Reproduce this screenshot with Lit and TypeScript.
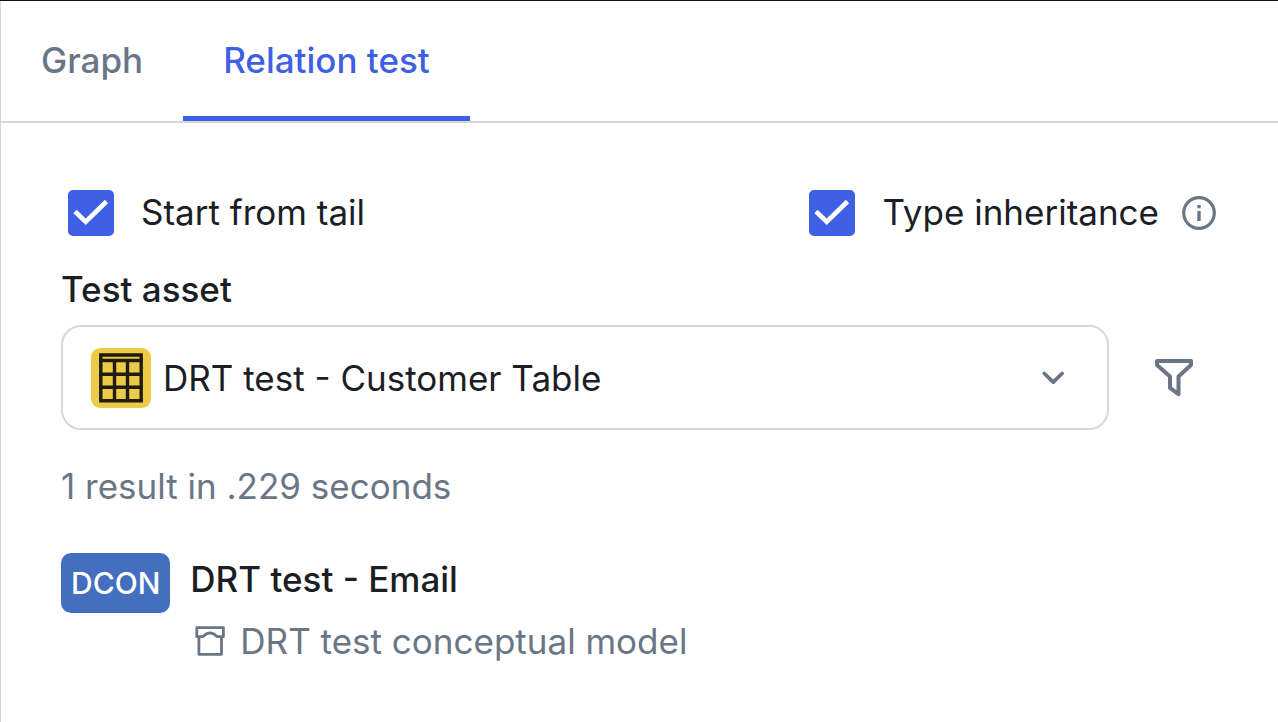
import { LitElement, html, css } from "lit";
import { customElement, state } from "lit/decorators.js";

@customElement("app-root")
class AppRoot extends LitElement {
  static styles = css`
    :host {
      display: block;
      box-sizing: border-box;
      min-height: 100vh;
      border-top: 1px solid #0b1424;
      background: #fff;
      color: #1b1e24;
      font: 400 35px/44px Inter, "Liberation Sans", sans-serif;
    }
    * { box-sizing: border-box; }
    svg { display: block; flex: none; fill: none; }
    button, select { font: inherit; color: inherit; background: none; border: 0; margin: 0; padding: 0; }
    .panel { min-height: calc(100vh - 1px); border-left: 1px solid #d5d8df; }
    .tabs { display: flex; border-bottom: 2px solid #d5d8df; }
    .tab {
      padding: 37px 40px 34px;
      border-bottom: 5px solid transparent;
      color: #6a7686;
      font-weight: 500;
    }
    .tab.active { color: #3f5fe4; border-bottom-color: #3f5fe4; }
    .content { padding: 60px 59px 60px 60px; }
    .options { display: flex; justify-content: space-between; align-items: center; height: 60px; }
    .option { display: flex; align-items: center; }
    .check { display: flex; align-items: center; gap: 20px; }
    .text { padding-bottom: 2px; }
    .box { display: grid; width: 60px; height: 60px; }
    .box > * { grid-area: 1 / 1; }
    .box input { appearance: none; margin: 7px; border: 2px solid #6a7686; border-radius: 5px; }
    .box input:checked { border-color: #3f5fe4; background: #3f5fe4; }
    .box svg { pointer-events: none; visibility: hidden; z-index: 1; }
    .box input:checked + svg { visibility: visible; }
    .info { margin-left: 20px; }
    .label { display: block; margin: 24px 0 14px; font-weight: 500; }
    .picker { display: flex; align-items: center; gap: 20px; }
    .field {
      display: flex;
      flex: 1;
      align-items: center;
      gap: 12px;
      height: 105px;
      padding: 0 34px 0 28px;
      border: 2px solid #d5d8df;
      border-radius: 20px;
    }
    .field select { flex: 1; min-width: 0; height: 60px; appearance: none; }
    .filter { display: grid; place-items: center; width: 90px; height: 90px; }
    .count { margin: 34px 0 45px; color: #6a7686; }
    .result { display: flex; gap: 20px; }
    .badge {
      flex: none;
      height: 60px;
      padding: 0 10px;
      border-radius: 10px;
      background: #446fbe;
      color: #fff;
      font-size: 30px;
      line-height: 60px;
      font-weight: 500;
    }
    .name { display: block; margin: 4px 0 18px; color: inherit; font-weight: 500; text-decoration: none; }
    .parent { display: flex; align-items: center; gap: 10px; color: #6a7686; }
  `;

  @state() private tab = "Relation test";

  private checkbox(id: string, text: string) {
    return html`<label class="check" for=${id}>
      <span class="box">
        <input type="checkbox" id=${id} checked />
        <svg width="60" height="60" viewBox="0 0 60 60" stroke="#fff" stroke-width="4.600">
          <path d="M14 28.500l10.700 10.200L45.500 18.500" />
        </svg>
      </span>
      <span class="text">${text}</span>
    </label>`;
  }

  render() {
    return html`
      <main class="panel">
        <div class="tabs" role="tablist">
          ${["Graph", "Relation test"].map(
            (t) => html`<button
              role="tab"
              class="tab ${this.tab === t ? "active" : ""}"
              aria-selected=${this.tab === t}
              @click=${() => (this.tab = t)}
            >${t}</button>`
          )}
        </div>
        <section class="content">
          <div class="options">
            ${this.checkbox("tail", "Start from tail")}
            <div class="option">
              ${this.checkbox("inheritance", "Type inheritance")}
              <button class="info" aria-label="About type inheritance">
                <svg width="40" height="40" viewBox="0 0 40 40">
                  <circle cx="20" cy="20" r="15.300" stroke="#6a7686" stroke-width="3.200" />
                  <path d="M18.300 12h3.400v3.200h-3.400zM18.300 18h3.400v10h-3.400z" fill="#6a7686" />
                </svg>
              </button>
            </div>
          </div>
          <label class="label" for="asset">Test asset</label>
          <div class="picker">
            <div class="field">
              <svg width="60" height="60" viewBox="0 0 60 60">
                <rect width="60" height="60" rx="9" fill="#eccb49" />
                <path
                  d="M9.800 7h40.400v45.700H9.800zM8 12.500h44M8 26.200h44M8 39.300h44M23.500 12v41M36.500 12v41"
                  stroke="#201c0b"
                  stroke-width="3.400"
                />
              </svg>
              <select id="asset">
                <option>DRT test - Customer Table</option>
              </select>
              <svg width="40" height="40" viewBox="0 0 40 40" stroke="#6a7686" stroke-width="3.800" stroke-linecap="round" stroke-linejoin="round">
                <path d="M11.300 15.500l8.900 8.600 8.900-8.600" />
              </svg>
            </div>
            <button class="filter" aria-label="Filter">
              <svg width="50" height="50" viewBox="0 0 50 50" stroke="#6a7686" stroke-width="4" stroke-linejoin="round">
                <path d="M8 8h34v4L29.500 23.500v17.700l-8.500-6.300V23.500L8 12z" />
              </svg>
            </button>
          </div>
          <p class="count">1 result in .229 seconds</p>
          <article class="result">
            <span class="badge">DCON</span>
            <div>
              <a class="name" href="#email">DRT test - Email</a>
              <div class="parent">
                <svg width="40" height="40" viewBox="0 0 40 40" stroke="#6a7686" stroke-width="2.800" stroke-linejoin="round">
                  <path d="M6.800 6.700h26.600v9h-5.200c-2-.200-2.200-1.200-3.600-2.200-1.400-1-2.800-1.500-4.600-1.500s-3.200.500-4.600 1.500c-1.400 1-1.600 2-3.600 2.200h-5zM8.900 15.700v17.600h22.600V15.700" />
                </svg>
                <span>DRT test conceptual model</span>
              </div>
            </div>
          </article>
        </section>
      </main>
    `;
  }
}
